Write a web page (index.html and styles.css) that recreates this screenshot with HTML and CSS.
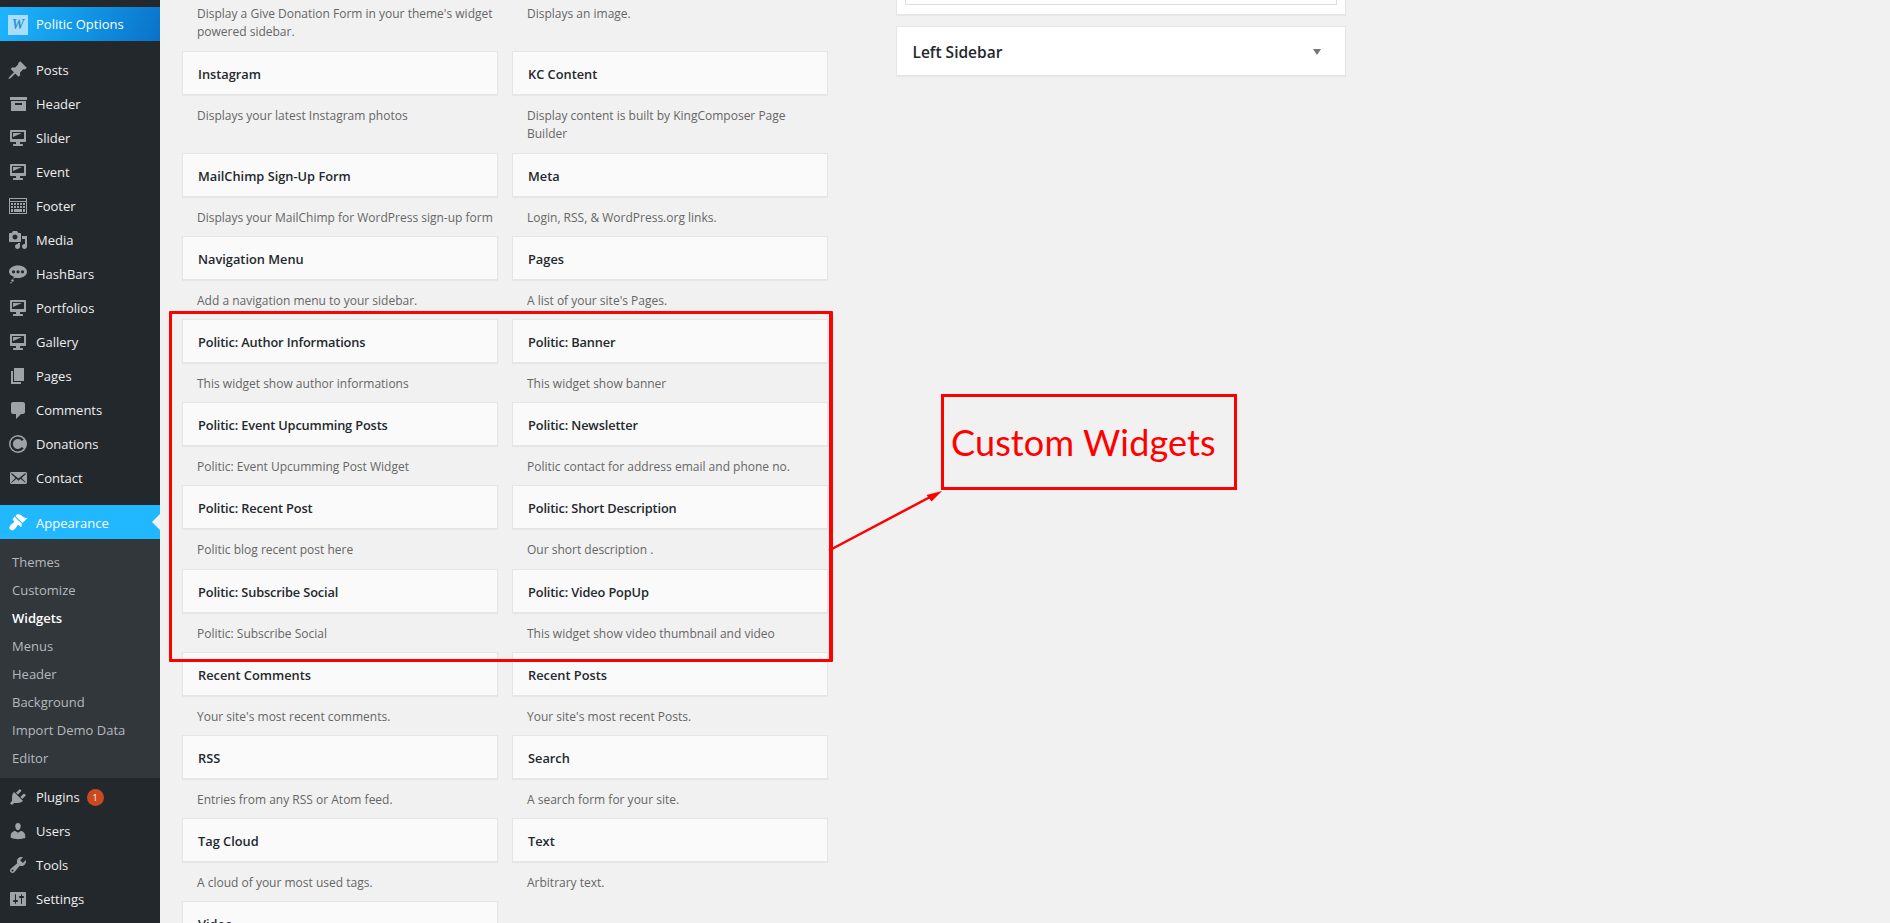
FILE: index.html
```html
<!DOCTYPE html>
<html lang="en">
<head>
<meta charset="utf-8">
<title>Widgets</title>
<link rel="stylesheet" href="styles.css">
</head>
<body>
<svg class="defs" aria-hidden="true">
  <symbol id="i-desktop" viewBox="0 0 20 20"><path d="M3 2h14c.55 0 1 .46 1 1v10c0 .55-.45 1-1 1h-5v2h2c.55 0 1 .45 1 1v1H5v-1c0-.55.45-1 1-1h2v-2H3c-.55 0-1-.45-1-1V3c0-.54.45-1 1-1zm13 9V4H4v7h12zM5 5h9L5 9V5z"/></symbol>
</svg>
<div class="page">
  <aside class="sidebar">
    <a class="item brand"><span class="logo">W</span><span>Politic Options</span></a>
    <div class="sep-a"></div>
    <a class="item"><svg class="ic" viewBox="0 0 20 20"><path d="M10.44 3.02l1.82-1.82 6.53 6.53-1.82 1.82c-.8-.5-1.5-.4-2.2.1l-2.5 2.5c-.5.9-.5 1.9.1 2.9l-1.8 1.8-3.3-3.3-4.5 4.5-2.6 1.3 1.3-2.6 4.5-4.5-3.3-3.3 1.8-1.8c1 .6 2 .6 2.9.1l2.5-2.5c.5-.7.6-1.4.1-2.2z"/></svg><span>Posts</span></a>
    <a class="item"><svg class="ic" viewBox="0 0 20 20"><path d="M2 3h17v3H2zM3 7h15v10H3zm4 2v2h7V9z" fill-rule="evenodd"/></svg><span>Header</span></a>
    <a class="item"><svg class="ic"><use href="#i-desktop"/></svg><span>Slider</span></a>
    <a class="item"><svg class="ic"><use href="#i-desktop"/></svg><span>Event</span></a>
    <a class="item"><svg class="ic" viewBox="0 0 20 20"><path fill-rule="evenodd" d="M1 2h18v16H1zM2 3v2h16V3zM2 6v11h16V6zM3 7h2v2H3zm3 0h2v2H6zm3 0h2v2H9zm3 0h2v2h-2zm3 0h2v2h-2zM3 10h2v2H3zm3 0h2v2H6zm3 0h2v2H9zm3 0h2v2h-2zm3 0h2v2h-2zM3 13h2v3H3zm3 0h8v3H6zm9 0h2v3h-2z"/></svg><span>Footer</span></a>
    <a class="item"><svg class="ic" viewBox="0 0 20 20"><path d="M13 11V4c0-.55-.45-1-1-1h-1.67L9 1H5L3.67 3H2c-.55 0-1 .45-1 1v7c0 .55.45 1 1 1h10c.55 0 1-.45 1-1zM7 4.5c1.38 0 2.5 1.12 2.5 2.5S8.38 9.5 7 9.5 4.5 8.38 4.5 7 5.62 4.5 7 4.5zM14 6h5v10.5c0 1.38-1.12 2.5-2.5 2.5S14 17.88 14 16.5s1.12-2.5 2.5-2.5c.17 0 .34.02.5.05V9h-3V6zm-4 8.05V13h2v3.5c0 1.38-1.12 2.5-2.5 2.5S7 17.88 7 16.5 8.12 14 9.5 14c.17 0 .34.02.5.05z"/></svg><span>Media</span></a>
    <a class="item"><svg class="ic" viewBox="0 0 20 20"><path fill-rule="evenodd" d="M10 1.5c5 0 9 2.7 9 6.2s-4 6.3-9 6.3c-1 0-2-.1-2.9-.3L5.5 15l.3-2.2C2.9 11.6 1 9.8 1 7.7 1 4.200 5 1.500 10 1.500zM5.500 6.200a1.600 1.600 0 1 0 0 3.200 1.600 1.600 0 0 0 0-3.200zm4.500 0a1.600 1.600 0 1 0 0 3.200 1.600 1.600 0 0 0 0-3.200zm4.500 0a1.600 1.600 0 1 0 0 3.200 1.600 1.600 0 0 0 0-3.200z"/><circle cx="4.500" cy="16.500" r="1.200"/><circle cx="3" cy="18.800" r=".8"/></svg><span>HashBars</span></a>
    <a class="item"><svg class="ic"><use href="#i-desktop"/></svg><span>Portfolios</span></a>
    <a class="item"><svg class="ic"><use href="#i-desktop"/></svg><span>Gallery</span></a>
    <a class="item"><svg class="ic" viewBox="0 0 20 20"><path d="M6 15V2h10v13H6zm-1 1h8v2H3V5h2v11z"/></svg><span>Pages</span></a>
    <a class="item"><svg class="ic" viewBox="0 0 20 20"><path d="M5 2h10c1.100 0 2 .9 2 2v8c0 1.100-.9 2-2 2h-2l-5 5v-5H5c-1.100 0-2-.9-2-2V4c0-1.100.9-2 2-2z"/></svg><span>Comments</span></a>
    <a class="item"><svg class="ic" viewBox="0 0 20 20"><circle cx="10" cy="10" r="9"/><path class="cut" d="M14.800 6.200A6.200 6.200 0 1 0 14.800 13.800"/><path class="bar" d="M7.500 10H17"/></svg><span>Donations</span></a>
    <a class="item"><svg class="ic" viewBox="0 0 20 20"><path d="M19 14.500v-9c0-.83-.67-1.500-1.500-1.500H3.490c-.83 0-1.500.67-1.500 1.500v9c0 .83.67 1.500 1.500 1.500H17.500c.83 0 1.500-.67 1.500-1.500zm-1.310-9.110c.33.33.15.67-.03.84L13.600 9.950l3.900 4.060c.12.14.2.36.06.51-.13.16-.43.15-.56.05l-4.370-3.730-2.140 1.950-2.130-1.950-4.370 3.730c-.13.1-.43.11-.56-.05-.14-.15-.06-.37.06-.51l3.900-4.060-4.060-3.720c-.18-.17-.36-.51-.03-.84s.67-.17.95.07l6.240 5.040 6.250-5.040c.28-.24.62-.4.95-.07z"/></svg><span>Contact</span></a>
    <div class="sep-b"></div>
    <a class="item active"><svg class="ic" viewBox="0 0 20 20"><path d="M14.480 11.060L7.410 3.990l1.500-1.500c.5-.56 2.300-.47 3.510.32 1.210.8 1.430 1.280 2.910 2.100 1.180.64 2.450 1.260 4.450.85zm-.71.71L6.700 4.700 4.930 6.470c-.39.39-.39 1.020 0 1.410l1.060 1.060c.39.39.39 1.030 0 1.420-.6.6-1.430 1.110-2.210 1.690-.35.26-.7.53-1.010.84-1.340 1.340-2.370 3.090-.47 4.710 1.900 1.630 3.380.45 4.900-1.060.3-.31.58-.66.84-1.010.58-.78 1.090-1.610 1.690-2.210.39-.39 1.020-.39 1.410 0l1.060 1.060c.39.39 1.030.39 1.420 0z"/></svg><span class="active-label">Appearance</span></a>
    <nav class="sub">
      <a>Themes</a><a>Customize</a><a class="current">Widgets</a><a>Menus</a><a>Header</a><a>Background</a><a>Import Demo Data</a><a>Editor</a>
    </nav>
    <div class="sep-c"></div>
    <a class="item"><svg class="ic" viewBox="0 0 20 20"><path d="M13.110 4.360L9.870 7.600 8 5.730l3.240-3.240c.35-.34 1.050-.2 1.560.32.52.51.66 1.210.31 1.550zm-8 1.770l.91-1.120 9.010 9.010-1.190.84c-.71.71-2.630 1.160-3.820 1.160H6.140L4.900 17.260c-.59.59-1.540.59-2.120 0-.59-.58-.59-1.530 0-2.120l1.240-1.240v-3.880c0-1.130.4-3.190 1.090-3.890zm7.260 3.970l3.240-3.240c.34-.35 1.040-.21 1.550.31.52.51.66 1.210.31 1.550l-3.240 3.250z"/></svg><span>Plugins</span><span class="badge">1</span></a>
    <a class="item"><svg class="ic" viewBox="0 0 20 20"><path d="M10 9.250c-2.270 0-2.730-3.440-2.730-3.440C7 4.020 7.820 2 9.970 2c2.160 0 2.980 2.020 2.710 3.810 0 0-.41 3.440-2.680 3.440zm0 2.570L12.720 10c2.390 0 4.520 2.330 4.520 4.530v2.490s-3.650 1.130-7.240 1.130c-3.650 0-7.240-1.130-7.240-1.130v-2.490c0-2.250 1.940-4.480 4.470-4.480z"/></svg><span>Users</span></a>
    <a class="item"><svg class="ic" viewBox="0 0 20 20"><path d="M16.680 9.770c-1.340 1.340-3.300 1.670-4.950.99l-5.410 6.520c-.99.99-2.590.99-3.580 0s-.99-2.590 0-3.570l6.520-5.420c-.68-1.650-.35-3.610.99-4.950 1.280-1.280 3.120-1.620 4.720-1.060l-2.890 2.890 2.820 2.820 2.860-2.870c.53 1.580.18 3.390-1.080 4.650zM3.810 16.210c.4.39 1.040.39 1.430 0 .4-.4.4-1.040 0-1.430-.39-.4-1.030-.4-1.430 0-.39.39-.39 1.030 0 1.430z"/></svg><span>Tools</span></a>
    <a class="item"><svg class="ic" viewBox="0 0 20 20"><path d="M18 16V4c0-.55-.45-1-1-1H3c-.55 0-1 .45-1 1v12c0 .55.45 1 1 1h14c.55 0 1-.45 1-1zM8 11h1c.55 0 1 .45 1 1s-.45 1-1 1H8v1.500c0 .28-.22.5-.5.5s-.5-.22-.5-.5V13H6c-.55 0-1-.45-1-1s.45-1 1-1h1V5.500c0-.28.22-.5.5-.5s.5.22.5.5V11zm5-2h-1c-.55 0-1-.45-1-1s.45-1 1-1h1V5.500c0-.28.22-.5.5-.5s.5.22.5.5V7h1c.55 0 1 .45 1 1s-.45 1-1 1h-1v5.500c0 .28-.22.5-.5.5s-.5-.22-.5-.5V9z"/></svg><span>Settings</span></a>
  </aside>

  <main class="content">
    <section class="widgets">
      <div class="cell"><p class="desc top">Display a Give Donation Form in your theme's widget powered sidebar.</p></div>
      <div class="cell"><p class="desc top">Displays an image.</p></div>

      <div class="cell"><div class="box">Instagram</div><p class="desc">Displays your latest Instagram photos</p></div>
      <div class="cell"><div class="box">KC Content</div><p class="desc">Display content is built by KingComposer Page Builder</p></div>

      <div class="cell"><div class="box">MailChimp Sign-Up Form</div><p class="desc">Displays your MailChimp for WordPress sign-up form</p></div>
      <div class="cell"><div class="box">Meta</div><p class="desc">Login, RSS, &amp; WordPress.org links.</p></div>

      <div class="cell"><div class="box">Navigation Menu</div><p class="desc">Add a navigation menu to your sidebar.</p></div>
      <div class="cell"><div class="box">Pages</div><p class="desc">A list of your site's Pages.</p></div>

      <div class="cell"><div class="box tight">Politic: Author Informations</div><p class="desc">This widget show author informations</p></div>
      <div class="cell"><div class="box tight">Politic: Banner</div><p class="desc">This widget show banner</p></div>

      <div class="cell"><div class="box tight">Politic: Event Upcumming Posts</div><p class="desc">Politic: Event Upcumming Post Widget</p></div>
      <div class="cell"><div class="box tight">Politic: Newsletter</div><p class="desc">Politic contact for address email and phone no.</p></div>

      <div class="cell"><div class="box tight">Politic: Recent Post</div><p class="desc">Politic blog recent post here</p></div>
      <div class="cell"><div class="box tight">Politic: Short Description</div><p class="desc">Our short description .</p></div>

      <div class="cell"><div class="box tight">Politic: Subscribe Social</div><p class="desc">Politic: Subscribe Social</p></div>
      <div class="cell"><div class="box tight">Politic: Video PopUp</div><p class="desc">This widget show video thumbnail and video</p></div>

      <div class="cell"><div class="box">Recent Comments</div><p class="desc">Your site's most recent comments.</p></div>
      <div class="cell"><div class="box">Recent Posts</div><p class="desc">Your site's most recent Posts.</p></div>

      <div class="cell"><div class="box">RSS</div><p class="desc">Entries from any RSS or Atom feed.</p></div>
      <div class="cell"><div class="box">Search</div><p class="desc">A search form for your site.</p></div>

      <div class="cell"><div class="box">Tag Cloud</div><p class="desc">A cloud of your most used tags.</p></div>
      <div class="cell"><div class="box">Text</div><p class="desc">Arbitrary text.</p></div>

      <div class="cell"><div class="box">Video</div></div>
    </section>

    <section class="areas">
      <div class="card clipped"><div class="inner"></div></div>
      <div class="card area"><h2>Left Sidebar</h2><span class="caret"></span></div>
    </section>
  </main>
</div>

<div class="mark-group"></div>
<div class="mark-label">Custom Widgets</div>
<svg class="mark-arrow" viewBox="0 0 1890 923" aria-hidden="true">
  <line x1="829" y1="550.500" x2="932" y2="496"/>
  <polygon points="942,491 926.500,495 931.500,501.500"/>
</svg>
</body>
</html>
```
FILE: styles.css
```css
* { box-sizing: border-box; }
html, body { margin: 0; padding: 0; height: 923px; overflow: hidden; background: #f1f1f1; }
body { font-family: "Open Sans", "Noto Sans", sans-serif; font-size: 13px; color: #23282d; position: relative; }
.defs { position: absolute; width: 0; height: 0; }

.page { display: flex; height: 923px; }

/* Admin sidebar */
.sidebar { width: 160px; flex: none; height: 923px; background: #23282d; padding-top: 7px; color: #eee; overflow: hidden; }
.item { display: flex; align-items: center; height: 34px; padding-left: 8px; gap: 8px; position: relative; font-size: 13px; color: #eee; }
.ic { width: 20px; height: 20px; flex: none; fill: #9ea3a8; }
.cut { fill: none; stroke: #23282d; stroke-width: 2.400; }
.bar { fill: none; stroke: #9ea3a8; stroke-width: 2.600; }
.sep-a { height: 12px; }
.sep-b { height: 10px; }
.sep-c { height: 2px; }

.brand { background: linear-gradient(115deg, #1fb6ff 0%, #129ae8 45%, #0a72c8 100%); color: #fff; }
.logo { width: 20px; height: 20px; margin-top: 2px; background: #a9defb; color: #2a93d2; font: italic 700 14px/20px "Liberation Serif", serif; text-align: center; flex: none; }

.active { background: #22b8ff; color: #fff; }
.active .ic { fill: #fff; }
.active-label { padding-top: 1px; }
.active::after { content: ""; position: absolute; right: 0; top: 50%; margin-top: -8px; border: 8px solid transparent; border-left-width: 0; border-right-color: #f1f1f1; }

.sub { display: flex; flex-direction: column; background: #32373c; padding: 9px 0 6px; }
.sub a { height: 28px; line-height: 28px; padding-left: 12px; font-size: 13px; color: #b4b9be; }
.sub .current { color: #fff; font-weight: 600; }

.badge { width: 17px; height: 17px; margin-left: -1px; border-radius: 50%; background: #ca4a1f; color: #fff; font-size: 9px; line-height: 17px; text-align: center; }

/* Content */
.content { display: flex; align-items: flex-start; padding-left: 22px; flex: 1; min-width: 0; }
.widgets { display: grid; grid-template-columns: 316px 315.500px; column-gap: 14px; flex: none; }
.box { height: 44px; display: flex; align-items: center; padding: 2px 15px 0; border: 1px solid #e5e5e5; background: #fafafa; box-shadow: 0 1px 1px rgba(0, 0, 0, .04); font-weight: 600; font-size: 12.800px; color: #23282d; }
.box.tight { letter-spacing: -.15px; }
.desc { margin: 0; padding: 12px 5px 8.980px 15px; font-size: 12px; line-height: 18.200px; color: #666; }
.desc.top { padding-top: 4.850px; padding-bottom: 10.020px; }

.areas { margin-left: 68.500px; width: 449.500px; flex: none; }
.card { background: #fff; border: 1px solid #e5e5e5; box-shadow: 0 1px 1px rgba(0, 0, 0, .04); }
.clipped { height: 15px; border-top: 0; padding: 0 8px; margin-bottom: 11px; }
.inner { height: 4.500px; border: 1px solid #ddd; border-top: 0; }
.area { height: 50px; display: flex; align-items: center; justify-content: space-between; padding: 1px 24px 0 15.500px; }
.area h2 { margin: 0; font-size: 15.500px; font-weight: 600; color: #23282d; }
.caret { width: 0; height: 0; border: 4px solid transparent; border-top: 6px solid #72777c; border-bottom: 0; }

/* Red annotations drawn over the page */
.mark-group { position: absolute; left: 169px; top: 311px; width: 664px; height: 351px; border: solid #f00; border-width: 3px 4px 3px 3px; border-radius: 1px; }
.mark-label { position: absolute; left: 941px; top: 394px; width: 296px; height: 96px; border: 3px solid #f00; color: #f00; font: 36px/90px "Lato", sans-serif; letter-spacing: .15px; padding-left: 7px; }
.mark-arrow { position: absolute; left: 0; top: 0; width: 1890px; height: 923px; pointer-events: none; }
.mark-arrow line { stroke: #f00; stroke-width: 2.500; }
.mark-arrow polygon { fill: #f00; }
```
